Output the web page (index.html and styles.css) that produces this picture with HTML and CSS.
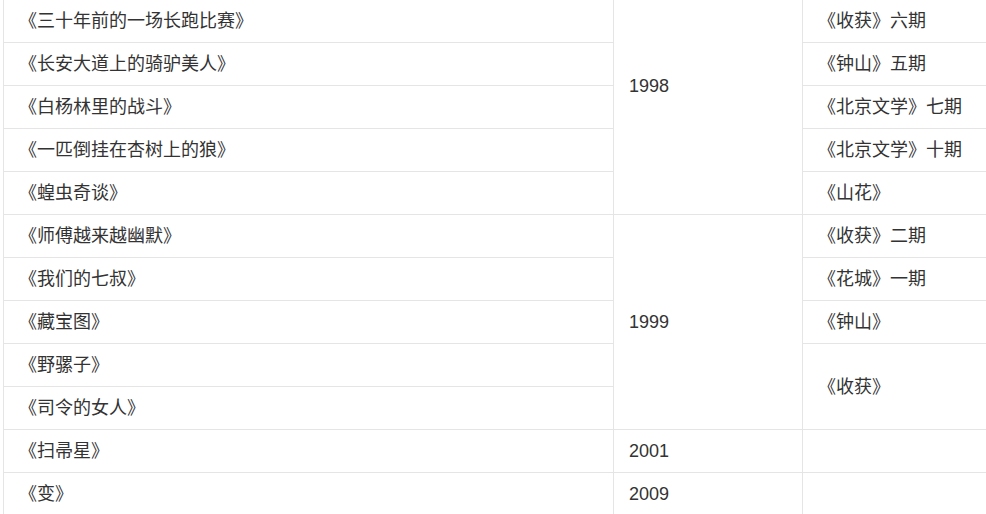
FILE: index.html
```html
<!DOCTYPE html>
<html lang="zh-CN">
<head>
<meta charset="utf-8">
<title>短篇小说</title>
<link rel="stylesheet" href="styles.css">
</head>
<body>
<table class="works">
  <colgroup>
    <col class="c-title">
    <col class="c-year">
    <col class="c-pub">
  </colgroup>
  <tbody>
    <tr class="scrolled"><td></td><td rowspan="6">1998</td><td></td></tr>
    <tr><td>《三十年前的一场长跑比赛》</td><td>《收获》六期</td></tr>
    <tr><td>《长安大道上的骑驴美人》</td><td>《钟山》五期</td></tr>
    <tr><td>《白杨林里的战斗》</td><td>《北京文学》七期</td></tr>
    <tr><td>《一匹倒挂在杏树上的狼》</td><td>《北京文学》十期</td></tr>
    <tr><td>《蝗虫奇谈》</td><td>《山花》</td></tr>
    <tr><td>《师傅越来越幽默》</td><td rowspan="5">1999</td><td>《收获》二期</td></tr>
    <tr><td>《我们的七叔》</td><td>《花城》一期</td></tr>
    <tr><td>《藏宝图》</td><td>《钟山》</td></tr>
    <tr><td>《野骡子》</td><td rowspan="2">《收获》</td></tr>
    <tr><td>《司令的女人》</td></tr>
    <tr><td>《扫帚星》</td><td>2001</td><td></td></tr>
    <tr><td>《变》</td><td>2009</td><td></td></tr>
  </tbody>
</table>
</body>
</html>
```
FILE: styles.css
```css
html, body {
  margin: 0;
  padding: 0;
  overflow: hidden;
  background: #fff;
}

.works {
  border-collapse: collapse;
  table-layout: fixed;
  width: 1200px;
  margin: -44px 0 0 3px;
  font-family: "Liberation Sans", "Noto Sans CJK SC", sans-serif;
  font-size: 18px;
  color: #333;
}

.c-title { width: 610px; }
.c-year { width: 189px; }
.c-pub { width: 401px; }

.works td {
  border: 1px solid #e5e5e5;
  height: 43px;
  padding: 0 15px;
  line-height: 24px;
  vertical-align: middle;
  text-align: left;
  white-space: nowrap;
  box-sizing: border-box;
}
```
